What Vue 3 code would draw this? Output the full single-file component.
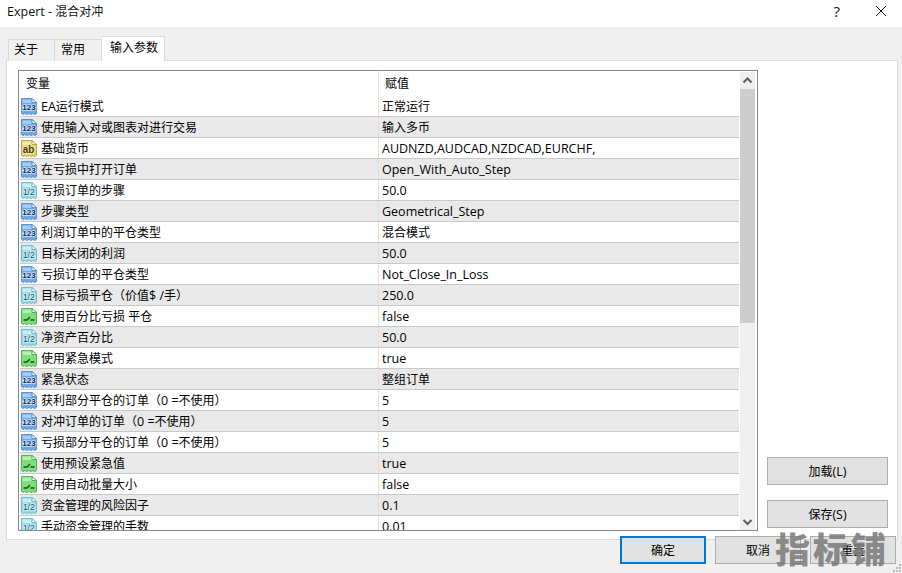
<script setup>
const seg = (t) =>
  t.split(/([\x00-\x7f]+)/).filter(Boolean).map((text) => ({ text, latin: /^[\x00-\x7f]/.test(text) }))

const rows = [
  ['i', 'EA运行模式', '正常运行'],
  ['i', '使用输入对或图表对进行交易', '输入多币'],
  ['s', '基础货币', 'AUDNZD,AUDCAD,NZDCAD,EURCHF,'],
  ['i', '在亏损中打开订单', 'Open_With_Auto_Step'],
  ['d', '亏损订单的步骤', '50.0'],
  ['i', '步骤类型', 'Geometrical_Step'],
  ['i', '利润订单中的平仓类型', '混合模式'],
  ['d', '目标关闭的利润', '50.0'],
  ['i', '亏损订单的平仓类型', 'Not_Close_In_Loss'],
  ['d', '目标亏损平仓（价值$ /手）', '250.0'],
  ['b', '使用百分比亏损 平仓', 'false'],
  ['d', '净资产百分比', '50.0'],
  ['b', '使用紧急模式', 'true'],
  ['i', '紧急状态', '整组订单'],
  ['i', '获利部分平仓的订单（0 =不使用）', '5'],
  ['i', '对冲订单的订单（0 =不使用）', '5'],
  ['i', '亏损部分平仓的订单（0 =不使用）', '5'],
  ['b', '使用预设紧急值', 'true'],
  ['b', '使用自动批量大小', 'false'],
  ['d', '资金管理的风险因子', '0.1'],
  ['d', '手动资金管理的手数', '0.01'],
].map(([type, name, value]) => ({ type, name, value, nameSeg: seg(name), valueSeg: seg(value) }))
</script>

<template>
  <div class="dialog">
    <div class="title">
      <span><span class="latin">Expert - </span>混合对冲</span>
      <span class="help">?</span>
      <svg class="close" width="12" height="12" viewBox="0 0 12 12"><path d="M1 1 11 11M11 1 1 11" stroke="#111" fill="none" /></svg>
    </div>
    <div class="tabs">
      <div class="tab first">关于</div>
      <div class="tab">常用</div>
      <div class="tab active">输入参数</div>
    </div>
    <div class="panel">
      <div class="table">
        <div class="list">
          <div class="head"><span class="h1">变量</span><span class="h2">赋值</span></div>
          <div v-for="r in rows" :key="r.name" class="row">
            <div class="c1">
              <svg class="icon" :class="'t-' + r.type" width="18" height="19" viewBox="0 0 18 19">
                <path class="doc" d="M1.500 1.500H12L16.500 5.500V16.500L15 17.500 13 16.500 11 17.500 9 16.500 7 17.500 5 16.500 3 17.500 1.500 16.500Z" />
                <rect class="band" x="2.500" y="2.500" width="9" height="3.500" />
                <path class="fold" d="M12 1.500V5.500H16.500Z" />
                <path v-if="r.type === 'b'" class="mark" d="M3.500 13H7L10 10M10.500 13H14.500" />
                <text v-else-if="r.type === 'i'" class="lab" x="9" y="13">123</text>
                <text v-else-if="r.type === 's'" class="lab ab" x="8.500" y="13.500">ab</text>
                <text v-else class="lab half" x="8.800" y="13.500">1/2</text>
              </svg>
              <span class="txt"><span v-for="(s, i) in r.nameSeg" :key="i" :class="{ latin: s.latin }">{{ s.text }}</span></span>
            </div>
            <div class="c2"><span v-for="(s, i) in r.valueSeg" :key="i" :class="{ latin: s.latin }">{{ s.text }}</span></div>
          </div>
        </div>
        <div class="scroll">
          <svg width="15" height="17" viewBox="0 0 15 17"><path d="M3.500 10.500 7.500 6.500 11.500 10.500" class="arrow" /></svg>
          <div class="track"><div class="thumb"></div></div>
          <svg width="15" height="17" viewBox="0 0 15 17"><path d="M3.500 7 7.500 11 11.500 7" class="arrow" /></svg>
        </div>
      </div>
      <div class="side">
        <button class="btn wide">加载<span class="latin">(L)</span></button>
        <button class="btn wide">保存<span class="latin">(S)</span></button>
      </div>
    </div>
    <div class="foot">
      <button class="btn ok">确定</button>
      <button class="btn">取消</button>
      <button class="btn">重置</button>
    </div>
    <svg class="grip" width="8" height="8" viewBox="0 0 8 8"><path d="M6 0h2v2H6zM3 3h2v2H3zM6 3h2v2H6zM0 6h2v2H0zM3 6h2v2H3zM6 6h2v2H6z" fill="#bdbdbd" /></svg>
    <div class="mark-text">指标铺</div>
  </div>
</template>

<style scoped>
.dialog {
  position: relative;
  width: 902px;
  height: 573px;
  overflow: hidden;
  display: flex;
  flex-direction: column;
  background: #f0f0f0;
  font: 12px "Open Sans", "Noto Sans CJK SC", sans-serif;
  color: #000;
}
.latin { font-size: 12.500px; }
.title {
  height: 27px;
  box-sizing: border-box;
  flex: none;
  background: #fff;
  display: flex;
  align-items: center;
  padding: 0 15px 5px 7px;
  font-size: 12px;
  color: #111;
}
.help { margin-left: auto; margin-right: 35px; font-size: 15px; line-height: 16px; }
.tabs {
  height: 25px;
  margin-top: 9px;
  padding-left: 8px;
  display: flex;
  align-items: flex-end;
  flex: none;
  position: relative;
  z-index: 1;
}
.tab {
  height: 22px;
  width: 47px;
  box-sizing: border-box;
  border: 1px solid #d9d9d9;
  border-bottom: 0;
  border-left: 0;
  background: #f0f0f0;
  padding-left: 6px;
  line-height: 20px;
}
.tab.first { border-left: 1px solid #d9d9d9; width: 47px; padding-left: 5px; }
.tab.active {
  height: 25px;
  width: 63px;
  background: #fff;
  padding-left: 8px;
  line-height: 22px;
}
.panel {
  height: 480px;
  width: 892px;
  box-sizing: border-box;
  margin-left: 6px;
  margin-top: -1px;
  flex: none;
  background: #fff;
  border: 1px solid #d9d9d9;
  padding: 9px 0 0 11px;
  display: flex;
}
.table {
  width: 740px;
  height: 461px;
  box-sizing: border-box;
  border: 1px solid #828790;
  display: flex;
  overflow: hidden;
}
.list { width: 720px; padding-left: 1px; box-sizing: border-box; flex: none; overflow: hidden; }
.head { height: 25px; display: flex; align-items: center; box-sizing: border-box; }
.h1 { width: 359px; padding-left: 6px; box-sizing: border-box; border-right: 1px solid #e4e4e4; height: 25px; line-height: 25px; }
.h2 { padding-left: 6px; line-height: 25px; }
.row {
  height: 21px;
  box-sizing: border-box;
  border-bottom: 1px solid #c9c9c9;
  display: flex;
  align-items: center;
}
.row:nth-child(odd) { background: #e9e9e9; }
.c1 {
  width: 359px;
  box-sizing: border-box;
  align-self: stretch;
  border-right: 1px solid #e0e0e0;
  display: flex;
  align-items: center;
  gap: 3px;
  flex: none;
  white-space: nowrap;
}
.c2 { white-space: nowrap; padding-left: 3px; }
.icon { flex: none; }
.doc { stroke-width: 1; }
.fold { fill: #fff; stroke-width: 1; }
.lab {
  font: bold 8px "Liberation Sans", sans-serif;
  text-anchor: middle;
  fill: #0c2a5c;
  paint-order: stroke;
  stroke: #d9e8f8;
  stroke-width: 1.500px;
}
.ab { font-size: 10px; fill: #4a3c08; stroke: #f3ecb4; }
.half { font-size: 8.500px; font-weight: normal; fill: #0e4a62; stroke: #d4f1f6; }
.mark { fill: none; stroke: #0d5a0d; stroke-width: 1.400; }
.t-i .doc { fill: #6fa8e4; stroke: #5a94cf; }
.t-i .fold { stroke: #5a94cf; }
.t-i .band { fill: #a9cdf2; }
.t-s .doc { fill: #e6d675; stroke: #b5a642; }
.t-s .fold { stroke: #b5a642; }
.t-s .band { fill: #f2e9ae; }
.t-d .doc { fill: #9adbe6; stroke: #6dbdd3; }
.t-d .fold { stroke: #6dbdd3; }
.t-d .band { fill: #c9eef4; }
.t-b .doc { fill: #7fdc7f; stroke: #52b452; }
.t-b .fold { stroke: #52b452; }
.t-b .band { fill: #b7edb7; }
.scroll {
  width: 15px;
  margin: 1px 2px 0 1px;
  background: #f0f0f0;
  display: flex;
  flex-direction: column;
}
.scroll svg { flex: none; }
.arrow { fill: none; stroke: #606060; stroke-width: 2; }
.track { flex: 1; }
.thumb { height: 234px; background: #cdcdcd; }
.side {
  width: 121px;
  margin-left: 9px;
  height: 458px;
  display: flex;
  flex-direction: column;
  justify-content: flex-end;
  gap: 15px;
}
.btn {
  width: 86px;
  height: 28px;
  box-sizing: border-box;
  padding: 0;
  border: 1px solid #adadad;
  background: #e1e1e1;
  font: 12px "Open Sans", "Noto Sans CJK SC", sans-serif;
  color: #000;
}
.btn.wide { width: 121px; }
.btn.ok { border: 2px solid #0078d7; }
.foot {
  margin-top: -4px;
  padding-left: 620px;
  display: flex;
  gap: 9px;
  position: relative;
}
.grip { position: absolute; right: 1px; bottom: 1px; }
.mark-text {
  position: absolute;
  left: 775px;
  top: 526px;
  font: 900 35px "Noto Sans CJK SC", sans-serif;
  color: rgba(125, 125, 125, 0.9);
  letter-spacing: 3px;
  line-height: 44px;
}
</style>
